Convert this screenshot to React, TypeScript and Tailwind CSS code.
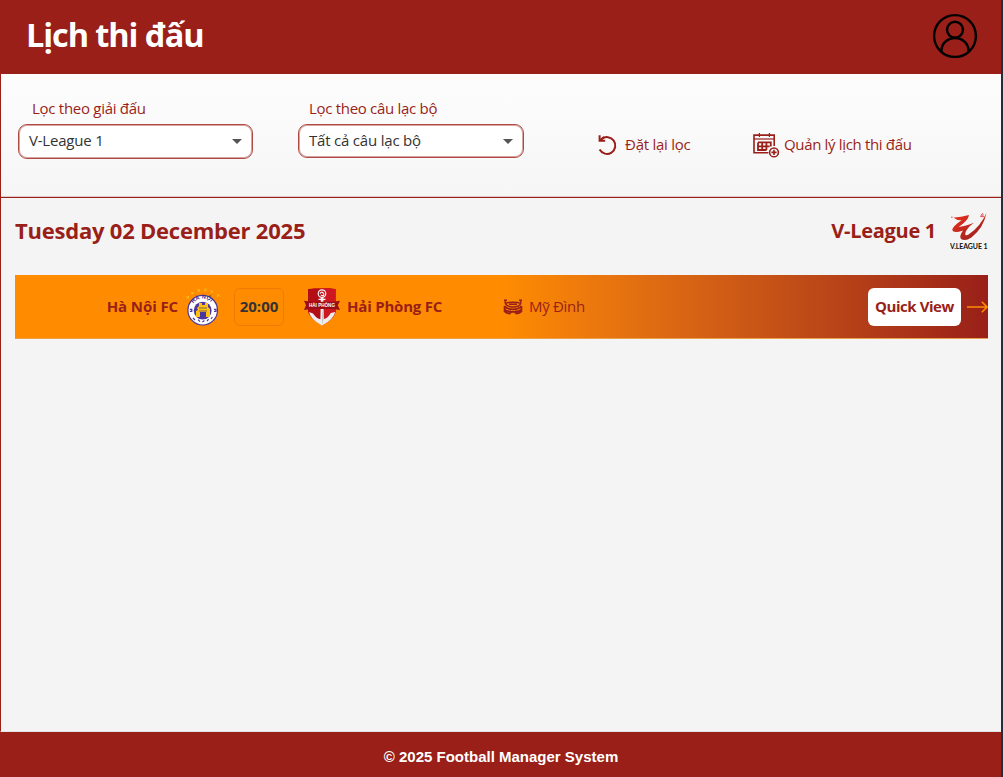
import React from 'react';

function UserIcon() {
  return (
    <svg width="46" height="46" viewBox="0 0 46 46" fill="none" stroke="#000" strokeWidth="2.4">
      <circle cx="23" cy="23" r="20.9" />
      <circle cx="23" cy="16.8" r="8" />
      <path d="M9.5 38.5v-1a13.5 12.5 0 0 1 27 0v1" />
    </svg>
  );
}

function ResetIcon() {
  return (
    <svg width="20" height="22" viewBox="0 0 20 22" fill="none" stroke="#991f18" strokeWidth="2">
      <path d="M3.6 5A8.4 8.4 0 1 1 1.6 15.6" />
      <path d="M1.6 1.2v5.6h5.6" />
      <path d="M2.2 6.2L6 3" />
    </svg>
  );
}

function CalendarIcon() {
  return (
    <svg width="27" height="26" viewBox="0 0 27 26" fill="none" stroke="#991f18" strokeWidth="1.6">
      <path d="M15.4 20.8H1V3.1h20.2v11" />
      <path d="M1 7h20" strokeWidth="1.2" />
      <path d="M6.4 1v4M16.4 1v4" strokeWidth="1.2" />
      <path d="M5 10.4h12.8v4M5 10.4v7.6h8.4M5 14.4h11.6M9.2 10.4v7.6M13.4 10.4v7.6" strokeWidth="1.8" />
      <circle cx="21" cy="20.4" r="4.4" />
      <path d="M21 17.8v5.2M18.4 20.4h5.2" />
    </svg>
  );
}

function HanoiCrest() {
  return (
    <svg width="34" height="38" viewBox="0 0 34 38">
      <g fill="none" stroke="#ffc21a" strokeWidth="1">
        <path d="M.4 8.4l2.4 2M2.8 8L.8 10.8M5.2 4.2l2.4 1.8M7.6 3.8L5.4 6.4M11.4 1.6l2.6 1.8M14 1.2l-2.2 2.8M18.2.8l2.4 2.2M20.6.8L18.2 3.2M24.6 2.2l2.4 2.4M27 2.6L24.6 5M31 6.2l2.4 2.2M33.4 6.2l-2.2 2.6" />
      </g>
      <circle cx="16.7" cy="22.2" r="14.8" fill="#fff" stroke="#4b3796" strokeWidth="1.2" />
      <circle cx="16.7" cy="22.6" r="8.9" fill="#4b35a0" />
      <path d="M11 20l2-2v-3h3v2h3v-2h3v4l2 2v8h-4v-5h-6v5h-4v-6l2-1z" fill="#ffc20e" />
      <path d="M13 20h8M13 23h8" stroke="#6b4667" strokeWidth=".8" />
      <defs>
        <path id="crest-arc" d="M6.4 18.4A10.6 9.6 0 0 1 27.2 18.4" />
      </defs>
      <text fill="#3b2a8b" fontFamily="Liberation Sans, sans-serif" fontWeight="700" fontSize="5.6">
        <textPath href="#crest-arc" startOffset="3" textLength="20">HÀ NỘI</textPath>
      </text>
      <path d="M3.8 21.4h2v2h-2M28 21.4h2v2h-2M7 30l2 2M12 31.6l2 2M16.4 34l2-1.4M21 33.2l1.6-2M25 31l1.4-2" fill="none" stroke="#4b35a0" strokeWidth="1.2" />
    </svg>
  );
}

function HaiPhongCrest() {
  return (
    <svg width="36" height="38" viewBox="0 0 36 38">
      <path d="M4 1q4 0 6-.8h16Q28 1 31.6 1v23Q30 31 18 37 6 31 4 24z" fill="#b30d16" />
      <path d="M18 .2h8Q28 1 31.6 1v23Q30 31 18 37z" fill="#ce1720" />
      <path d="M5 24l4 1.4q4 5.6 7.4 5.8L16.8 10h2.6l.4 21q4-.4 7-6l4.4-1Q30 31 18 37.6 6 31 5 24z" fill="#eee" />
      <path d="M18 21l1.8 10L18 37z" fill="#c8c8c8" />
      <g fill="none" stroke="#f4f4f4" strokeWidth="1.2">
        <circle cx="18" cy="5.6" r="3.8" />
        <path d="M16 5.6q2-3 3.5 0t-2.8 1.4M14.5 11.4h7M18 9.4v5" />
      </g>
      <path d="M0 12.8l7 1h22l7-1-2.2 4.4L36 22l-7-1H7l-7 1 2-4.8z" fill="#9c0c14" />
      <text x="5" y="19.4" textLength="26" lengthAdjust="spacingAndGlyphs" fill="#fff" fontFamily="Liberation Sans, sans-serif" fontWeight="700" fontSize="5.2">HẢI PHÒNG</text>
    </svg>
  );
}

function StadiumIcon() {
  return (
    <svg width="20" height="16" viewBox="0 0 20 16" fill="none" stroke="#991f18" strokeWidth="1.4">
      <path d="M2.2.8v3.4M17.8.8v3.4M1 1.3h3M16 1.3h3" />
      <path d="M2 4.4q3-1.2 8-1.2t8 1.2M2 4.4q2 3.6 8 3.6t8-3.6M6 5.2h8" />
      <path d="M1.4 7.2q3 3.2 8.6 3.2t8.6-3.2M1.6 7v5.4q1.8 2 5 2.1l1.6-1.6h3.6l1.6 1.6q3.2-.1 5-2.1V7M2 10.8q2 1.8 6 1.6M18 10.8q-2 1.8-6 1.6" strokeWidth="1.8" />
    </svg>
  );
}

function LeagueLogo() {
  return (
    <svg width="38" height="38" viewBox="0 0 38 38">
      <defs>
        <linearGradient id="ribbon" x1="0" y1="0" x2="1" y2="1">
          <stop offset="0" stopColor="#f0321f" />
          <stop offset="1" stopColor="#8e1d1c" />
        </linearGradient>
      </defs>
      <path d="M3.4 4.4Q10 4.6 19 2 18.6 7 8.6 14 14 13.8 24 9.8 16 15.6 15.2 20.6 15 23.6 18.6 21.6 30.4 13.6 36.4 0 33.6 15 21.4 24.4 15.4 28.4 11.4 26.2 8.6 23.4 13 17.4 3.4 20.6 2.2 17 2.4 13.4 11.6 7.2 6.6 7.4 3.4 4.4z" fill="url(#ribbon)" />
      <path d="M1 4.2h1.6M30.6 3.6l1.2-2.4 2 2.4zM32.2.4l1.4 1" fill="none" stroke="#e22b20" strokeWidth=".8" />
      <text x="0" y="36" textLength="37.5" lengthAdjust="spacing" fill="#111" fontFamily="Lato, sans-serif" fontWeight="700" fontSize="7">V.LEAGUE 1</text>
    </svg>
  );
}

function ArrowIcon() {
  return (
    <svg width="21" height="12" viewBox="0 0 21 12" fill="none" stroke="#ff8c00" strokeWidth="1.6">
      <path d="M0 6h19.8M14.8.8L20 6l-5.2 5.2" />
    </svg>
  );
}

function Select({ value, className }: { value: string; className: string }) {
  return (
    <div className={`flex items-center justify-between rounded-[9px] border border-[#b04a45] bg-white pr-[10px] pb-[2px] pl-[10px] text-[15px] text-[#333] shadow-[inset_0_0_0_1px_rgba(153,31,24,0.4)] ${className}`}>
      <span className="tracking-[-0.2px]">{value}</span>
      <svg className="mt-[2px]" width="10" height="5" viewBox="0 0 10 5" fill="#555">
        <path d="M0 0h10L5 5z" />
      </svg>
    </div>
  );
}

export default function App() {
  return (
    <div className="flex h-[777px] w-[1003px] bg-[#272c38] pr-[2px] font-['Open_Sans','Noto_Sans',sans-serif] whitespace-nowrap text-[#991f18]">
      <div className="flex w-[1001px] flex-col bg-[#f4f4f4]">
        <header className="flex h-[74px] shrink-0 items-center justify-between bg-[#991f18] pr-[23px] pb-[2px] pl-[26px]">
          <h1 className="pb-[3px] text-[32.5px] leading-[44px] font-bold tracking-[-1.1px] text-white">Lịch thi đấu</h1>
          <UserIcon />
        </header>

        <section className="flex h-[124px] shrink-0 border-b border-l border-[#991f18] bg-linear-to-b from-[#fdfdfd] to-[#f6f6f6] pl-[17px] text-[15px] leading-5 shadow-[inset_0_-1px_0_#dfc8c6]">
          <div className="w-[280px] pt-[24px]">
            <div className="mb-[6px] pl-[14px] tracking-[-0.28px]">Lọc theo giải đấu</div>
            <Select className="h-[35px] w-[235px] pb-[3px]" value="V-League 1" />
          </div>
          <div className="w-[300px] pt-[24px]">
            <div className="mb-[6px] pl-[11px] tracking-[-0.3px]">Lọc theo câu lạc bộ</div>
            <Select className="h-[34px] w-[226px]" value="Tất cả câu lạc bộ" />
          </div>
          <div className="flex w-[155px] items-center gap-[7px] pt-[18px]">
            <ResetIcon />
            <span className="pb-[2px] tracking-[-0.25px]">Đặt lại lọc</span>
          </div>
          <div className="flex items-center gap-[4px] pt-[18px]">
            <CalendarIcon />
            <span className="pb-[2px] tracking-[-0.34px]">Quản lý lịch thi đấu</span>
          </div>
        </section>

        <main className="flex-1 border-b border-l border-b-[#e4e4e4] border-l-[#991f18] pr-[13px] pl-[14px]">
          <div className="flex h-[77px] items-start justify-between">
            <h2 className="pt-[17px] text-[22px] leading-[30px] font-bold tracking-[-0.22px]">Tuesday 02 December 2025</h2>
            <div className="flex gap-[14px] pt-[15px]">
              <span className="pt-[3px] text-[20px] leading-[30px] font-bold tracking-[-0.28px]">V-League 1</span>
              <LeagueLogo />
            </div>
          </div>

          <div className="flex h-[64px] items-center border-b border-[#eca04d] bg-linear-to-r from-[#ff8c00] from-50% to-[#991f18] text-[15px]">
            <span className="w-[163px] text-right font-bold tracking-[-0.1px]">Hà Nội FC</span>
            <div className="ml-[8px] w-[34px]"><HanoiCrest /></div>
            <div className="ml-[14px] flex h-[38px] w-[50px] items-center justify-center rounded-[6px] border border-[#ef7b07] font-bold text-[#333]">
              <span>20:00</span>
            </div>
            <div className="ml-[20px] w-[36px]"><HaiPhongCrest /></div>
            <span className="ml-[7px] w-[156px] font-bold tracking-[-0.2px]">Hải Phòng FC</span>
            <StadiumIcon />
            <span className="ml-[6px] tracking-[-0.3px]">Mỹ Đình</span>
            <div className="ml-auto flex items-center gap-[6px]">
              <button className="flex h-[38px] w-[93px] items-center justify-center rounded-[6px] bg-white font-bold tracking-[-0.45px]"><span>Quick View</span></button>
              <ArrowIcon />
            </div>
          </div>
        </main>

        <footer className="flex h-[45px] shrink-0 items-center justify-center bg-[#991f18] pt-[5px] pl-px font-['Liberation_Sans',Arial,sans-serif] text-[15px] font-bold text-white">
          <span>© 2025 Football Manager System</span>
        </footer>
      </div>
    </div>
  );
}
